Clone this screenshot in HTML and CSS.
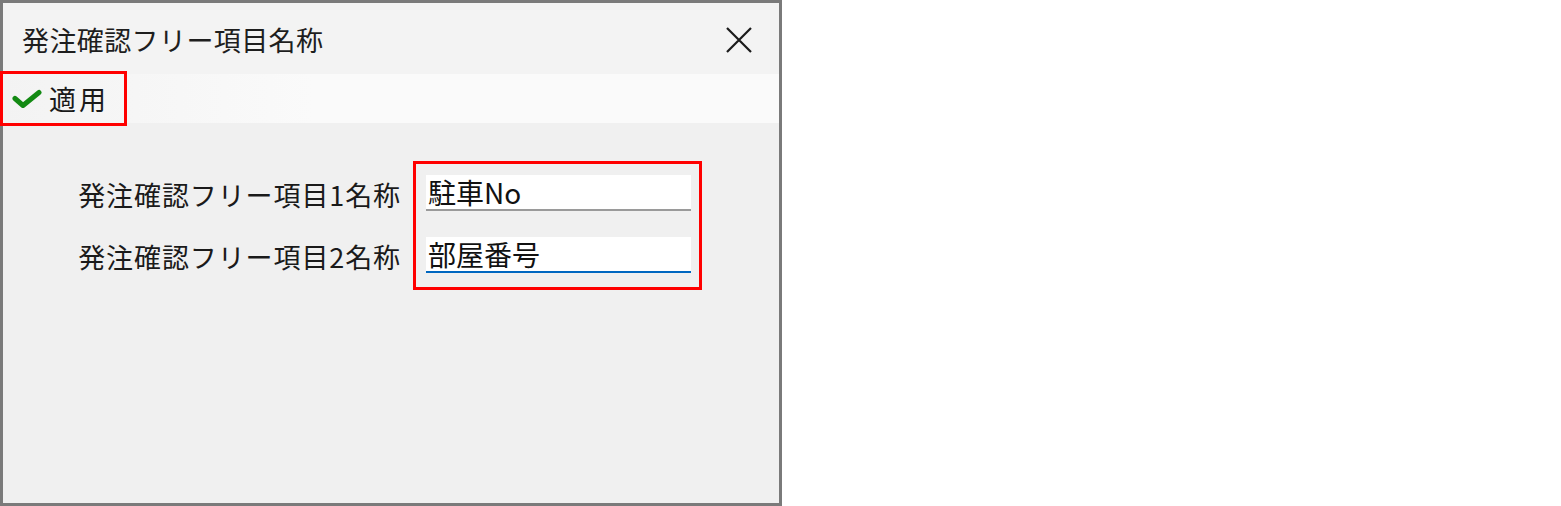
FILE: index.html
```html
<!DOCTYPE html>
<html lang="ja">
<head>
<meta charset="utf-8">
<link rel="stylesheet" href="styles.css">
</head>
<body>
<div class="window">
  <div class="titlebar">
    <span class="title">発注確認フリー項目名称</span>
    <span class="close" aria-label="閉じる">
      <svg width="26" height="26" viewBox="0 0 26 26"><path d="M1 1L25 25M25 1L1 25" stroke="#1a1a1a" stroke-width="2.2" fill="none"/></svg>
    </span>
  </div>
  <div class="toolbar">
    <div class="apply">
      <svg class="check" width="30" height="20" viewBox="0 0 30 20"><path d="M3 9.5L11 16.5L27 3.5" stroke="#138a13" stroke-width="5" fill="none" stroke-linecap="round" stroke-linejoin="round"/></svg>
      <span class="apply-label">適用</span>
    </div>
  </div>
  <div class="content">
    <div class="form">
      <div class="labels">
        <div class="label">発注確認フリー項目1名称</div>
        <div class="label">発注確認フリー項目2名称</div>
      </div>
      <div class="fields">
        <div class="field">駐車No</div>
        <div class="field focused">部屋番号</div>
      </div>
    </div>
  </div>
</div>
</body>
</html>
```
FILE: styles.css
```css
* { box-sizing: border-box; }
html, body { margin: 0; padding: 0; background: #ffffff; }
body {
  font-family: "Noto Sans CJK JP", "Noto Sans", sans-serif;
  color: #1a1a1a;
  width: 1561px;
  height: 506px;
  overflow: hidden;
}
.window {
  width: 782px;
  height: 506px;
  border: 3px solid #7a7a7a;
  background: #f0f0f0;
  display: flex;
  flex-direction: column;
}
.titlebar {
  height: 71px;
  flex: none;
  background: #f3f3f3;
  display: flex;
  align-items: center;
  justify-content: space-between;
  padding: 2px 27px 0 19px;
}
.title {
  font-size: 27px;
  letter-spacing: 0.4px;
  color: #1e1e1e;
}
.close { display: flex; }
.toolbar {
  height: 49px;
  flex: none;
  background: linear-gradient(to right, #f3f3f3, #fafafa 40%, #fafafa);
  display: flex;
  align-items: center;
}
.apply {
  height: 55px;
  width: 127px;
  margin: -3px 0 -3px -3px;
  border: 3px solid #ff0000;
  display: flex;
  align-items: center;
  padding-left: 9px;
  gap: 7px;
}
.apply-label { font-size: 27px; letter-spacing: 3px; color: #1a1a1a; }
.content {
  flex: 1;
  padding-top: 38px;
  padding-left: 410px;
}
.form {
  display: flex;
  border: 3px solid #ff0000;
  width: 289px;
  height: 129px;
  position: relative;
}
.labels {
  position: absolute;
  right: 100%;
  margin-right: 15px;
  top: 0;
  display: flex;
  flex-direction: column;
  gap: 26px;
  padding-top: 12px;
  white-space: nowrap;
  align-items: flex-end;
}
.label {
  height: 36px;
  display: flex;
  align-items: center;
  font-size: 27px;
  letter-spacing: 0.9px;
  color: #1a1a1a;
}
.fields {
  display: flex;
  flex-direction: column;
  gap: 26px;
  padding: 11px 0 0 10px;
}
.field {
  width: 265px;
  height: 36px;
  background: #ffffff;
  border-bottom: 2px solid #9a9a9a;
  font-size: 28px;
  padding-left: 2px;
  display: flex;
  align-items: center;
  color: #111;
}
.field.focused { border-bottom: 2px solid #0067c0; }
```
